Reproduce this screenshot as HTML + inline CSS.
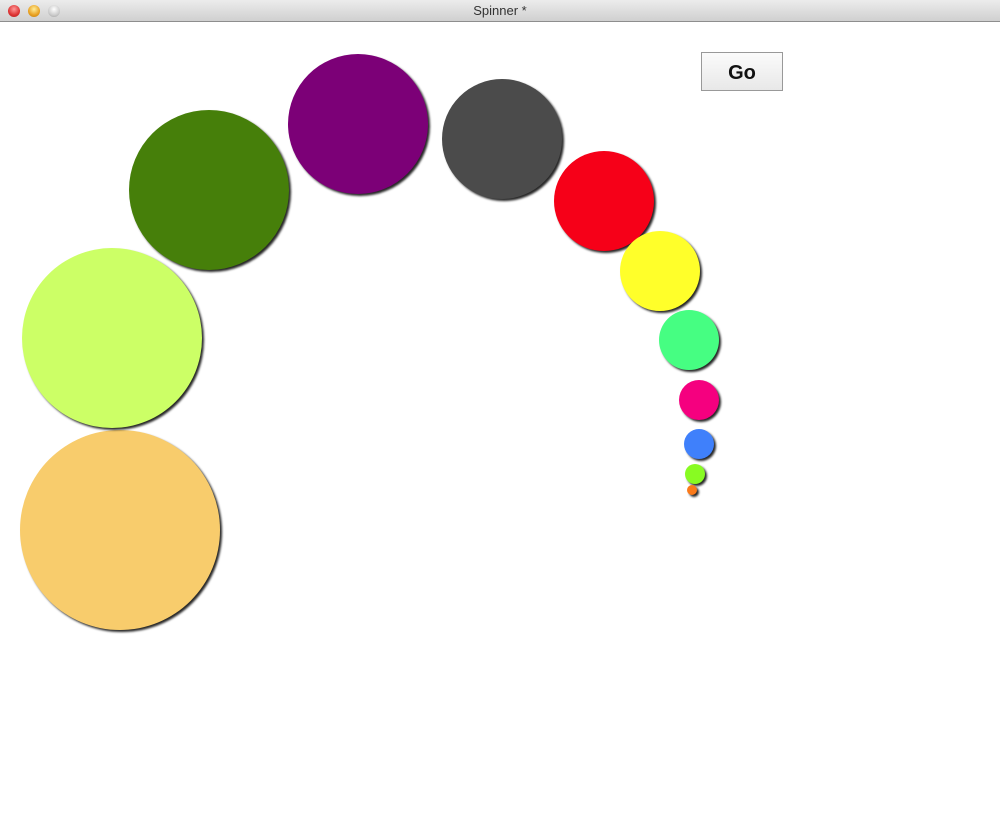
<!DOCTYPE html>
<html><head><style>
body{margin:0;width:1000px;height:822px;background:#fff;position:relative;overflow:hidden;font-family:"Liberation Sans",sans-serif}
.tb{position:absolute;left:0;top:0;width:1000px;height:21px;background:linear-gradient(#ececec,#d0d0d0);border-bottom:1px solid #8e8e8e;text-align:center;font-size:13px;line-height:22px;color:#333}
.l{position:absolute;top:5px;width:12px;height:12px;border-radius:50%}
.c{position:absolute;border-radius:50%;box-shadow:2px 2px 2px rgba(0,0,0,.85)}
.go{position:absolute;left:701px;top:52px;width:80px;height:37px;border:1px solid #999;background:linear-gradient(#fbfbfb,#e8e8e8);font-weight:bold;font-size:20px;text-align:center;line-height:40px;color:#111}
</style></head><body>
<div class="tb">Spinner *
<div class="l" style="left:8px;background:radial-gradient(circle at 50% 35%,#f99,#d33 60%,#a22)"></div>
<div class="l" style="left:28px;background:radial-gradient(circle at 50% 35%,#fe9,#e9a020 60%,#b77a10)"></div>
<div class="l" style="left:48px;background:radial-gradient(circle at 50% 35%,#fff,#ccc 60%,#999)"></div>
</div>
<div class="go">Go</div>
<div class="c" style="left:20px;top:430px;width:200px;height:200px;background:#f8cc6c"></div>
<div class="c" style="left:22px;top:248px;width:180px;height:180px;background:#ccff66"></div>
<div class="c" style="left:129px;top:110px;width:160px;height:160px;background:#467f0a"></div>
<div class="c" style="left:288px;top:54px;width:140px;height:140px;background:#7c0077"></div>
<div class="c" style="left:442px;top:79px;width:120px;height:120px;background:#4b4b4b"></div>
<div class="c" style="left:554px;top:151px;width:100px;height:100px;background:#f60018"></div>
<div class="c" style="left:620px;top:231px;width:80px;height:80px;background:#ffff2a"></div>
<div class="c" style="left:659px;top:310px;width:60px;height:60px;background:#46fe82"></div>
<div class="c" style="left:679px;top:380px;width:40px;height:40px;background:#f5007f"></div>
<div class="c" style="left:684px;top:429px;width:30px;height:30px;background:#3f80fb"></div>
<div class="c" style="left:685px;top:464px;width:20px;height:20px;background:#88fb22"></div>
<div class="c" style="left:687px;top:485px;width:10px;height:10px;background:#fb7a1a"></div>
</body></html>
